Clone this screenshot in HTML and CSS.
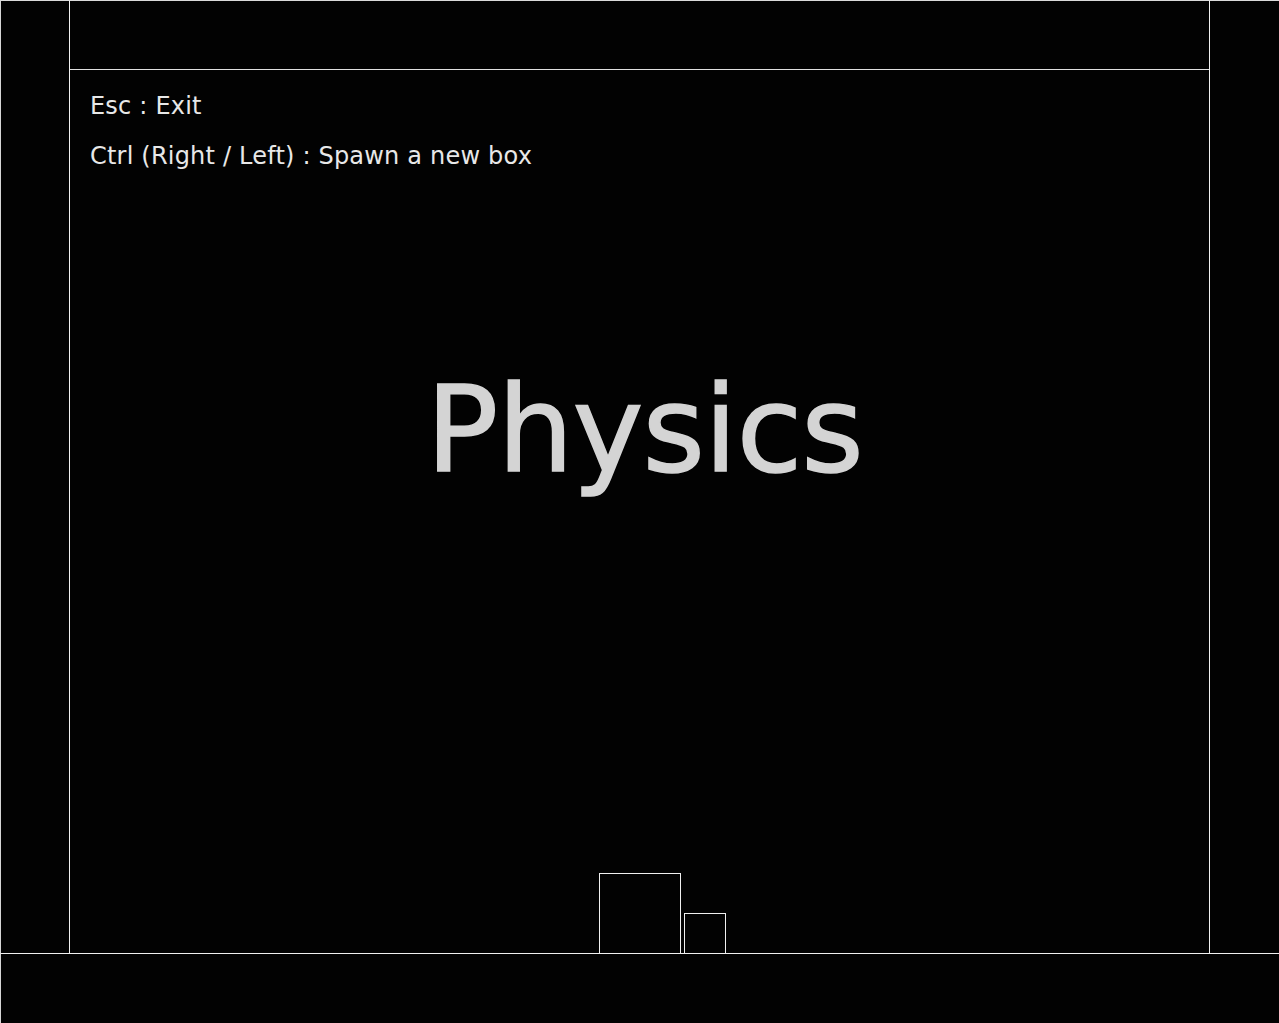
FILE: index.html
```html
<!DOCTYPE html>
<html lang="en">
<head>
<meta charset="utf-8">
<title>Physics</title>
<link rel="stylesheet" href="styles.css">
</head>
<body>
<div class="world">
  <div class="wall wall-left"></div>
  <div class="ceiling"></div>
  <div class="wall wall-right"></div>
  <main class="arena">
    <div class="help">
      <p class="help-line">Esc : Exit</p>
      <p class="help-line">Ctrl (Right / Left) : Spawn a new box</p>
    </div>
    <h1 class="title">Physics</h1>
    <div class="body body-big"></div>
    <div class="body body-small"></div>
  </main>
  <div class="floor"></div>
</div>
</body>
</html>
```

FILE: styles.css
```css
html, body {
  margin: 0;
  padding: 0;
  background: #000;
  height: 100%;
  overflow: hidden;
}

.world {
  display: grid;
  grid-template-columns: 70px 1139px 1fr;
  grid-template-rows: 70px 883px 1fr;
  width: 1279px;
  height: 1023px;
  background: #020202;
  font-family: "DejaVu Sans", sans-serif;
  color: #e4e4e4;
}

.wall-left {
  grid-column: 1;
  grid-row: 1 / 3;
  border-top: 1px solid #dadada;
  border-left: 1px solid #d6d6d6;
  border-right: 1px solid #f0f0f0;
}

.ceiling {
  grid-column: 2;
  grid-row: 1;
  border-top: 1px solid #dadada;
  border-bottom: 1px solid #e0e0e0;
}

.wall-right {
  grid-column: 3;
  grid-row: 1 / 3;
  border-top: 1px solid #dadada;
  border-left: 1px solid #f0f0f0;
}

.floor {
  grid-column: 1 / 4;
  grid-row: 3;
  border-top: 1px solid #f0f0f0;
  border-left: 1px solid #d6d6d6;
}

.arena {
  grid-column: 2;
  grid-row: 2;
  position: relative;
  padding: 11px 0 0 20px;
}

.help-line {
  margin: 0;
  font-size: 24px;
  line-height: 50px;
  letter-spacing: 0.2px;
  color: #e8e8e8;
}

.title {
  margin: 189px 0 0 -10px;
  text-align: center;
  font-size: 120px;
  line-height: 120px;
  font-weight: normal;
  color: #d4d4d4;
  letter-spacing: -1px;
  -webkit-text-stroke: 1.5px #d4d4d4;
}

.body {
  position: absolute;
  bottom: 0;
  border: 1px solid #f0f0f0;
  border-bottom: none;
  box-sizing: border-box;
}

.body-big {
  left: 529px;
  width: 82px;
  height: 80px;
}

.body-small {
  left: 614px;
  width: 42px;
  height: 40px;
}
```
